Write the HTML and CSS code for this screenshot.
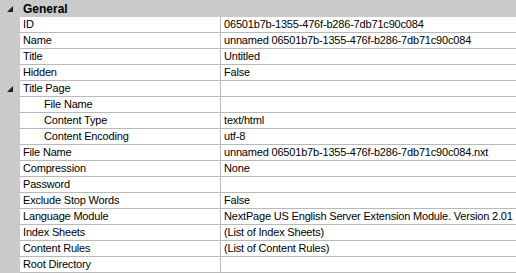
FILE: index.html
```html
<!DOCTYPE html>
<html>
<head>
<meta charset="utf-8">
<link rel="stylesheet" href="styles.css">
</head>
<body>
<div class="grid">
  <div class="cat">
    <span class="glyph"><svg width="6" height="6" viewBox="0 0 6 6"><polygon points="6,0 6,6 0,6" fill="#222"/></svg></span>
    <span class="cat-label">General</span>
  </div>
  <div class="row"><div class="gut"></div><div class="name">ID</div><div class="val">06501b7b-1355-476f-b286-7db71c90c084</div></div>
  <div class="row"><div class="gut"></div><div class="name">Name</div><div class="val">unnamed 06501b7b-1355-476f-b286-7db71c90c084</div></div>
  <div class="row"><div class="gut"></div><div class="name">Title</div><div class="val">Untitled</div></div>
  <div class="row"><div class="gut"></div><div class="name">Hidden</div><div class="val">False</div></div>
  <div class="row"><div class="gut"><svg width="6" height="6" viewBox="0 0 6 6"><polygon points="6,0 6,6 0,6" fill="#222"/></svg></div><div class="name">Title Page</div><div class="val"></div></div>
  <div class="row"><div class="gut"></div><div class="name sub">File Name</div><div class="val"></div></div>
  <div class="row"><div class="gut"></div><div class="name sub">Content Type</div><div class="val">text/html</div></div>
  <div class="row"><div class="gut"></div><div class="name sub">Content Encoding</div><div class="val">utf-8</div></div>
  <div class="row"><div class="gut"></div><div class="name">File Name</div><div class="val">unnamed 06501b7b-1355-476f-b286-7db71c90c084.nxt</div></div>
  <div class="row"><div class="gut"></div><div class="name">Compression</div><div class="val">None</div></div>
  <div class="row"><div class="gut"></div><div class="name">Password</div><div class="val"></div></div>
  <div class="row"><div class="gut"></div><div class="name">Exclude Stop Words</div><div class="val">False</div></div>
  <div class="row"><div class="gut"></div><div class="name">Language Module</div><div class="val">NextPage US English Server Extension Module. Version 2.01</div></div>
  <div class="row"><div class="gut"></div><div class="name">Index Sheets</div><div class="val">(List of Index Sheets)</div></div>
  <div class="row"><div class="gut"></div><div class="name">Content Rules</div><div class="val">(List of Content Rules)</div></div>
  <div class="row"><div class="gut"></div><div class="name">Root Directory</div><div class="val"></div></div>
</div>
</body>
</html>
```
FILE: styles.css
```css
html, body {
  margin: 0;
  padding: 0;
  background: #cacaca;
  overflow: hidden;
}
.grid {
  width: 516px;
  font-family: "Liberation Sans", Arial, sans-serif;
  font-size: 11px;
  letter-spacing: -0.18px;
  color: #000;
}
.cat {
  height: 17px;
  display: flex;
  align-items: center;
  background: #cacaca;
}
.glyph {
  width: 23px;
  display: flex;
  justify-content: flex-start;
  padding-left: 7px;
  box-sizing: border-box;
}
.cat-label {
  font-weight: bold;
  font-size: 12px;
  letter-spacing: 0;
}
.row {
  display: grid;
  grid-template-columns: 20px 201px 1fr;
  height: 16px;
}
.gut {
  background: #cacaca;
  display: flex;
  align-items: center;
  padding-left: 7px;
}
.name, .val {
  background: #fff;
  border-bottom: 1px solid #b9b9b9;
  line-height: 15px;
  white-space: nowrap;
  overflow: hidden;
}
.name {
  padding-left: 3px;
  border-right: 1px solid #b9b9b9;
}
.name.sub {
  padding-left: 24px;
}
.val {
  padding-left: 3px;
}
```
